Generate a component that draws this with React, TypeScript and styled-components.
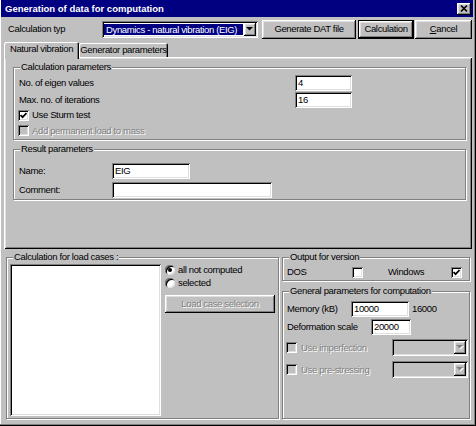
import React from "react";
import styled, { createGlobalStyle, css } from "styled-components";

const GlobalStyle = createGlobalStyle`
  * { box-sizing: border-box; }
  html, body { margin: 0; padding: 0; background: #c0c0c0; }
  body {
    font-family: "Liberation Sans", Arial, sans-serif;
    font-size: 9.5px;
    letter-spacing: -0.35px;
    line-height: 12px;
    color: #000;
  }
`;

const raised = css`
  background: #c0c0c0;
  box-shadow: inset -1px -1px 0 #000, inset 1px 1px 0 #fff,
    inset -2px -2px 0 #808080, inset 2px 2px 0 #dfdfdf;
`;
const sunken = css`
  box-shadow: inset 1px 1px 0 #808080, inset -1px -1px 0 #fff,
    inset 2px 2px 0 #000, inset -2px -2px 0 #dfdfdf;
`;
const disabledText = css`
  color: #808080;
  text-shadow: 1px 1px 0 #fff;
`;

const Window = styled.div`
  width: 476px;
  height: 426px;
  display: flex;
  flex-direction: column;
  padding: 0 4px 4px 1px;
  background: #c0c0c0;
  box-shadow: inset -1px -1px 0 #000, inset -2px -2px 0 #808080,
    inset 1px 0 0 #fff;
`;

const TitleBar = styled.div`
  height: 17px;
  margin-right: -1px;
  display: flex;
  align-items: center;
  justify-content: space-between;
  padding: 0 2px 0 4px;
  background: #000080;
  color: #fff;
  font-weight: bold;
  letter-spacing: 0;
`;

const CloseBox = styled.div`
  width: 14px;
  height: 12px;
  display: flex;
  align-items: center;
  justify-content: center;
  ${raised}
`;

const Toolbar = styled.div`
  height: 24px;
  display: flex;
  align-items: center;
  padding-left: 7px;
`;

const Label = styled.span<{ $w?: number; $ml?: number; $disabled?: boolean }>`
  flex: none;
  width: ${(p) => (p.$w ? `${p.$w}px` : "auto")};
  margin-left: ${(p) => p.$ml ?? 0}px;
  white-space: nowrap;
  ${(p) => p.$disabled && disabledText}
`;

const Combo = styled.div<{ $w: number; $disabled?: boolean; $mr?: number }>`
  flex: none;
  width: ${(p) => p.$w}px;
  height: 17px;
  margin-left: auto;
  margin-right: ${(p) => p.$mr ?? 0}px;
  padding: 2px;
  display: flex;
  background: ${(p) => (p.$disabled ? "#c0c0c0" : "#fff")};
  ${sunken}
`;

const ComboValue = styled.div`
  flex: 1;
  margin: 1px 1px 1px 0;
  padding-left: 2px;
  background: #000080;
  color: #fff;
  line-height: 11px;
  white-space: nowrap;
  overflow: hidden;
`;

const ComboEmpty = styled.div`
  flex: 1;
`;

const DropButton = styled.div`
  width: 12px;
  height: 13px;
  display: flex;
  align-items: center;
  justify-content: center;
  ${raised}
`;

const Button = styled.button<{ $w: number; $h?: number; $ml?: number; $mt?: number; $default?: boolean }>`
  flex: none;
  width: ${(p) => p.$w}px;
  height: ${(p) => p.$h ?? 19}px;
  margin: ${(p) => p.$mt ?? 0}px 0 0 ${(p) => p.$ml ?? 0}px;
  padding: 0;
  border: none;
  font: inherit;
  letter-spacing: inherit;
  color: #000;
  ${raised}
  ${(p) =>
    p.$default &&
    css`
      box-shadow: inset 0 0 0 1px #000, inset -2px -2px 0 #000,
        inset 2px 2px 0 #fff, inset -3px -3px 0 #808080,
        inset 3px 3px 0 #dfdfdf;
    `}
  ${(p) => p.disabled && disabledText}
`;

const TabStrip = styled.div`
  height: 16px;
  display: flex;
  align-items: flex-end;
  padding-left: 3px;
`;

const Tab = styled.div<{ $active?: boolean; $w: number }>`
  position: relative;
  z-index: ${(p) => (p.$active ? 1 : 0)};
  width: ${(p) => p.$w}px;
  height: ${(p) => (p.$active ? 17 : 14)}px;
  margin-bottom: ${(p) => (p.$active ? -2 : 0)}px;
  padding-bottom: ${(p) => (p.$active ? 3 : 0)}px;
  display: flex;
  align-items: center;
  justify-content: center;
  background: #c0c0c0;
  border-radius: 2px 2px 0 0;
  box-shadow: inset 1px 1px 0 #fff, inset -1px 0 0 #000, inset -2px 0 0 #808080;
`;

const Panel = styled.div`
  height: 192px;
  margin-left: 3px;
  padding: 10px 6px 0 9px;
  display: flex;
  flex-direction: column;
  box-shadow: inset 1px 1px 0 #fff, inset -1px -1px 0 #000,
    inset 2px 2px 0 #dfdfdf, inset -2px -2px 0 #808080;
`;

const Group = styled.div<{ $mt?: number; $w?: number; $grow?: boolean }>`
  position: relative;
  flex: ${(p) => (p.$grow ? "1" : "none")};
  width: ${(p) => (p.$w ? `${p.$w}px` : "auto")};
  margin-top: ${(p) => p.$mt ?? 0}px;
  border: 1px solid #808080;
  box-shadow: inset 1px 1px 0 #fff, 1px 1px 0 #fff;
`;

const Caption = styled.span`
  position: absolute;
  top: -7px;
  left: 6px;
  padding: 0 1px;
  background: #c0c0c0;
  line-height: 12px;
  white-space: nowrap;
`;

const CalcBody = styled.div`
  padding: 6px 4px 0 5px;
  display: flex;
  flex-direction: column;
`;

const ResultBody = styled.div`
  padding: 11px 4px 0 5px;
  display: flex;
  flex-direction: column;
`;

const Row = styled.div<{ $h: number; $mt?: number }>`
  height: ${(p) => p.$h}px;
  margin-top: ${(p) => p.$mt ?? 0}px;
  display: flex;
  align-items: center;
`;

const TextInput = styled.div<{ $w: number }>`
  flex: none;
  width: ${(p) => p.$w}px;
  height: 16px;
  padding: 2px 3px;
  line-height: 12px;
  background: #fff;
  white-space: nowrap;
  ${sunken}
`;

const CheckBox = styled.span<{ $disabled?: boolean; $ml?: number }>`
  flex: none;
  width: 11px;
  height: 11px;
  margin-left: ${(p) => p.$ml ?? 0}px;
  display: flex;
  align-items: center;
  justify-content: center;
  background: ${(p) => (p.$disabled ? "#c0c0c0" : "#fff")};
  ${sunken}
`;

const Radio = styled.span<{ $checked?: boolean }>`
  flex: none;
  width: 10px;
  height: 10px;
  border-radius: 50%;
  display: flex;
  align-items: center;
  justify-content: center;
  background: #fff;
  box-shadow: inset 1px 1px 0 #808080, inset -1px -1px 0 #dfdfdf,
    inset 2px 2px 0 #000;
  &::after {
    content: "";
    display: ${(p) => (p.$checked ? "block" : "none")};
    width: 4px;
    height: 4px;
    border-radius: 50%;
    background: #000;
  }
`;

const LowerRow = styled.div`
  flex: 1;
  display: flex;
  gap: 3px;
  padding: 8px 0 3px 5px;
`;

const LoadBody = styled.div`
  padding: 6px 0 2px 3px;
  display: flex;
`;

const ListBox = styled.div`
  flex: none;
  width: 151px;
  height: 152px;
  background: #fff;
  ${sunken}
`;

const RadioColumn = styled.div`
  width: 110px;
  margin-left: 4px;
  display: flex;
  flex-direction: column;
`;

const RightColumn = styled.div`
  flex: 1;
  margin-right: 2px;
  display: flex;
  flex-direction: column;
`;

const OutputBody = styled.div`
  padding: 6px 0 0 4px;
  display: flex;
`;

const GeneralBody = styled.div`
  padding: 8px 0 0 4px;
  display: flex;
  flex-direction: column;
`;

const Arrow = ({ disabled }: { disabled?: boolean }) => (
  <svg width="8" height="5" viewBox="0 0 8 5">
    {disabled && <polygon points="1,1 8,1 4.5,4.5" fill="#fff" />}
    <polygon points="0,0 7,0 3.5,3.5" fill={disabled ? "#808080" : "#000"} />
  </svg>
);

const Check = () => (
  <svg width="7" height="7" viewBox="0 0 7 7">
    <polyline points="0.5,3 2.6,5.2 6.5,1" fill="none" stroke="#000" strokeWidth="1.7" />
  </svg>
);

export default function App() {
  return (
    <>
      <GlobalStyle />
      <Window>
        <TitleBar>
          <span>Generation of data for computation</span>
          <CloseBox>
            <svg width="8" height="7" viewBox="0 0 8 7">
              <path d="M1 0.5 L7 6.5 M7 0.5 L1 6.5" stroke="#000" strokeWidth="1.6" />
            </svg>
          </CloseBox>
        </TitleBar>

        <Toolbar>
          <Label $w={93}>Calculation typ</Label>
          <Combo $w={156}>
            <ComboValue>Dynamics - natural vibration (EIG)</ComboValue>
            <DropButton>
              <Arrow />
            </DropButton>
          </Combo>
          <Button $w={94} $ml={4}>Generate DAT file</Button>
          <Button $w={56} $ml={2} $default>Calculation</Button>
          <Button $w={57} $ml={1}>
            <u>C</u>ancel
          </Button>
        </Toolbar>

        <TabStrip>
          <Tab $active $w={75}>Natural vibration</Tab>
          <Tab $w={89}>Generator parameters</Tab>
        </TabStrip>

        <Panel>
          <Group>
            <Caption>Calculation parameters</Caption>
            <CalcBody>
              <Row $h={17}>
                <Label $w={276}>No. of eigen values</Label>
                <TextInput $w={57}>4</TextInput>
              </Row>
              <Row $h={17}>
                <Label $w={276}>Max. no. of iterations</Label>
                <TextInput $w={57}>16</TextInput>
              </Row>
              <Row $h={14}>
                <CheckBox $ml={-1}>
                  <Check />
                </CheckBox>
                <Label $ml={3}>Use Sturm test</Label>
              </Row>
              <Row $h={17}>
                <CheckBox $ml={-1} $disabled />
                <Label $ml={3} $disabled>Add permanent load to mass</Label>
              </Row>
            </CalcBody>
          </Group>

          <Group $mt={9}>
            <Caption>Result parameters</Caption>
            <ResultBody>
              <Row $h={19}>
                <Label $w={93}>Name:</Label>
                <TextInput $w={78}>EIG</TextInput>
              </Row>
              <Row $h={19}>
                <Label $w={93}>Comment:</Label>
                <TextInput $w={160} />
              </Row>
            </ResultBody>
          </Group>
        </Panel>

        <LowerRow>
          <Group $w={273}>
            <Caption>Calculation for load cases :</Caption>
            <LoadBody>
              <ListBox />
              <RadioColumn>
                <Row $h={12}>
                  <Radio $checked />
                  <Label $ml={3}>all not computed</Label>
                </Row>
                <Row $h={13}>
                  <Radio />
                  <Label $ml={3}>selected</Label>
                </Row>
                <Button $w={110} $h={18} $mt={6} disabled>
                  Load case selection
                </Button>
              </RadioColumn>
            </LoadBody>
          </Group>

          <RightColumn>
            <Group>
              <Caption>Output for version</Caption>
              <OutputBody>
                <Row $h={16}>
                  <Label $w={65}>DOS</Label>
                  <CheckBox />
                  <Label $w={63} $ml={25}>Windows</Label>
                  <CheckBox>
                    <Check />
                  </CheckBox>
                </Row>
              </OutputBody>
            </Group>

            <Group $mt={10} $grow>
              <Caption>General parameters for computation</Caption>
              <GeneralBody>
                <Row $h={17}>
                  <Label $w={64}>Memory (kB)</Label>
                  <TextInput $w={58}>10000</TextInput>
                  <Label $ml={3}>16000</Label>
                </Row>
                <Row $h={17} $mt={1}>
                  <Label $w={84}>Deformation scale</Label>
                  <TextInput $w={40}>20000</TextInput>
                </Row>
                <Row $h={17} $mt={4}>
                  <CheckBox $ml={-1} $disabled />
                  <Label $ml={4} $disabled>Use imperfection</Label>
                  <Combo $w={76} $mr={1} $disabled>
                    <ComboEmpty />
                    <DropButton>
                      <Arrow disabled />
                    </DropButton>
                  </Combo>
                </Row>
                <Row $h={17} $mt={5}>
                  <CheckBox $ml={-1} $disabled />
                  <Label $ml={4} $disabled>Use pre-stressing</Label>
                  <Combo $w={76} $mr={1} $disabled>
                    <ComboEmpty />
                    <DropButton>
                      <Arrow disabled />
                    </DropButton>
                  </Combo>
                </Row>
              </GeneralBody>
            </Group>
          </RightColumn>
        </LowerRow>
      </Window>
    </>
  );
}
